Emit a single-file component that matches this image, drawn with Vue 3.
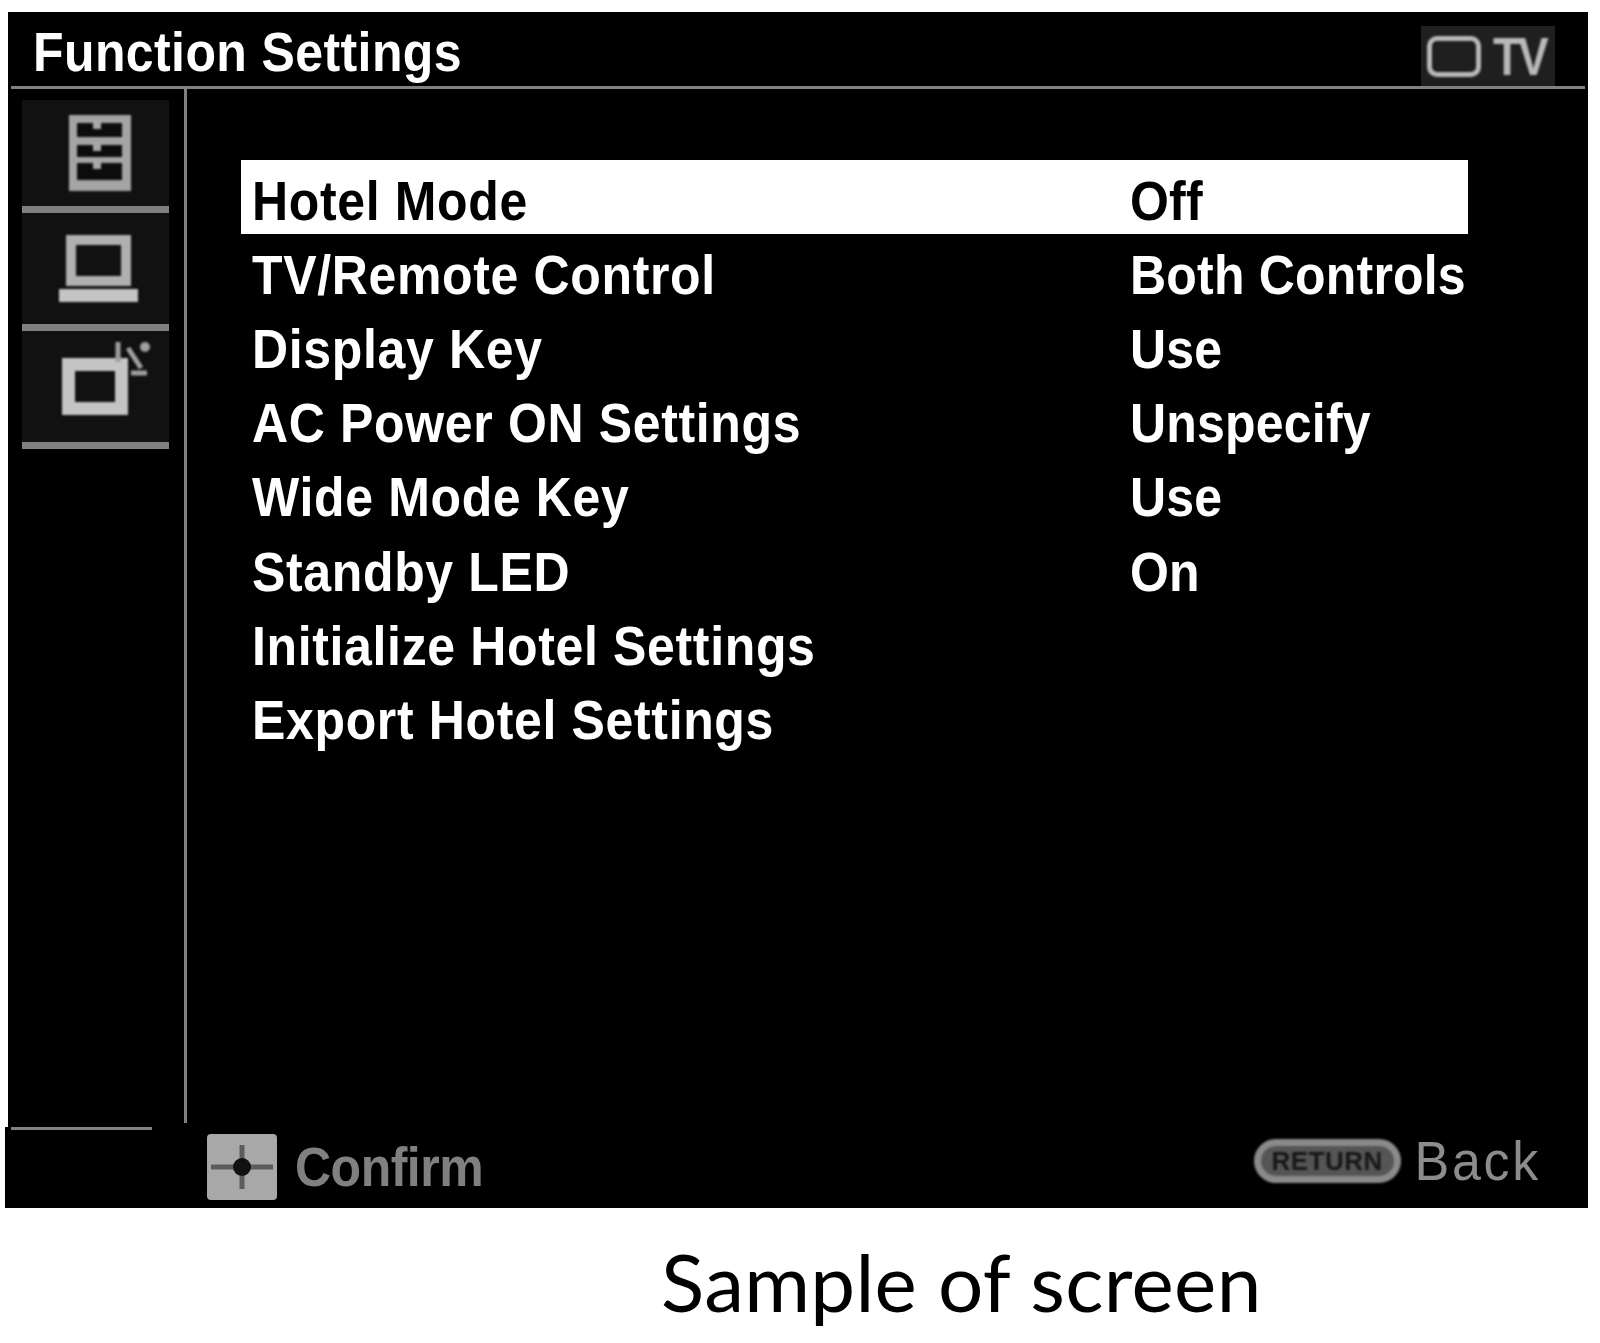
<script setup>
const rows = [
  { id: 1, name: "Hotel Mode", value: "Off", active: true },
  { id: 2, name: "TV/Remote Control", value: "Both Controls" },
  { id: 3, name: "Display Key", value: "Use" },
  { id: 4, name: "AC Power ON Settings", value: "Unspecify" },
  { id: 5, name: "Wide Mode Key", value: "Use" },
  { id: 6, name: "Standby LED", value: "On" },
  { id: 7, name: "Initialize Hotel Settings", value: "" },
  { id: 8, name: "Export Hotel Settings", value: "" },
];
</script>

<template>
  <div class="page">
    <div class="screen">
      <div class="head">
        <div class="title tall">Function Settings</div>
        <div class="source">
          <span class="source-box"></span>
          <span class="source-text">TV</span>
        </div>
      </div>
      <div class="body">
        <div class="side">
          <div class="tabs">
            <div class="tab">
              <svg class="icon drawers" width="62" height="76" viewBox="0 0 62 76">
                <rect width="62" height="76" fill="#a4a4a4" />
                <path d="M8 8H53V22H8ZM8 30H53V42H8ZM8 48H53V65H8Z" fill="#0c0c0c" />
                <path d="M28 6v8M28 28v8M28 46v8" stroke="#a8a8a8" stroke-width="8" />
              </svg>
            </div>
            <div class="tab">
              <svg class="icon monitor" width="80" height="68" viewBox="0 0 80 68">
                <rect x="12" y="5" width="55" height="41" fill="none" stroke="#b0b0b0" stroke-width="10" />
                <rect x="0" y="54" width="79" height="13" fill="#c4c4c4" />
              </svg>
            </div>
            <div class="tab">
              <svg class="icon tv" width="92" height="78" viewBox="0 0 92 78">
                <rect x="9.5" y="24.5" width="53" height="44" fill="none" stroke="#c4c4c4" stroke-width="13" />
                <path d="M59 2V22M69 8L82 28M72 33H88" stroke="#a0a0a0" stroke-width="5" />
                <circle cx="86" cy="7" r="5" fill="#a0a0a0" />
              </svg>
            </div>
          </div>
        </div>
        <div class="list">
          <div v-for="row in rows" :key="row.id" :class="['row', row.active ? 'active' : '']">
            <span class="name tall">{{ row.name }}</span>
            <span class="value tall">{{ row.value }}</span>
          </div>
        </div>
      </div>
    </div>
    <div class="foot">
      <div class="foot-line"></div>
      <div class="foot-row">
        <div class="confirm">
          <svg class="key" width="70" height="66" viewBox="0 0 70 66">
            <rect width="70" height="66" rx="4" fill="#a8a8a8" />
            <path d="M4 33H66M35 11V55" stroke="#5c5c5c" stroke-width="5" />
            <circle cx="35" cy="33" r="9" fill="#111" />
          </svg>
          <span class="tall">Confirm</span>
        </div>
        <div class="back">
          <span class="pill">RETURN</span>
          <span class="tall">Back</span>
        </div>
      </div>
    </div>
    <div class="caption">Sample of screen</div>
  </div>
</template>

<style scoped>
.page {
  width: 1600px;
  height: 1343px;
  background: #fff;
  font-family: "Liberation Sans", Arial, sans-serif;
  overflow: hidden;
  padding-top: 12px;
  box-sizing: border-box;
}

.tall {
  display: inline-block;
  transform: scaleY(1.12);
  filter: blur(0.5px);
}

.screen {
  margin-left: 8px;
  width: 1580px;
  height: 1115px;
  background: #000;
  display: flex;
  flex-direction: column;
}

.head {
  height: 74px;
  margin: 0 3px;
  border-bottom: 3px solid #808080;
  display: flex;
  justify-content: space-between;
  padding: 0 30px 0 22px;
}

.title {
  color: #fff;
  font-size: 50px;
  font-weight: 700;
  line-height: 1;
  letter-spacing: 0.4px;
  margin-top: 15px;
  height: 50px;
}

.source {
  margin-top: 14px;
  width: 134px;
  height: 60px;
  background: #1f1f1f;
  display: flex;
  align-items: center;
  gap: 12px;
  padding-left: 6px;
  box-sizing: border-box;
}

.source-box {
  width: 44px;
  height: 31px;
  border: 5px solid #b8b8b8;
  border-radius: 10px;
  filter: blur(1px);
}

.source-text {
  color: #b8b8b8;
  font-size: 46px;
  font-weight: 700;
  line-height: 1;
  letter-spacing: -3px;
  transform: scaleY(1.18);
  filter: blur(1px);
}

.body {
  flex: 1;
  display: flex;
  min-height: 0;
}

.side {
  flex: none;
  box-sizing: border-box;
  width: 179px;
  height: 1034px;
  border-right: 3px solid #808080;
  padding: 11px 0 0 14px;
}

.tabs {
  width: 147px;
  display: flex;
  flex-direction: column;
}

.tab {
  height: 111px;
  background: #111;
  border-bottom: 7px solid #808080;
  display: flex;
  align-items: center;
}

.tab:first-child {
  height: 106px;
}

.icon {
  filter: blur(1px);
}

.drawers {
  margin-left: 47px;
}

.monitor {
  margin: 1px 0 0 37px;
}

.tv {
  margin: -15px 0 0 37px;
}

.list {
  padding: 71px 0 0 54px;
  display: flex;
  flex-direction: column;
}

.row {
  width: 1227px;
  height: 74.2px;
  padding: 7px 0 0 11px;
  box-sizing: border-box;
  display: grid;
  grid-template-columns: 878px 1fr;
  align-items: center;
  color: #fff;
  font-size: 50px;
  font-weight: 700;
  white-space: nowrap;
}

.row.active {
  background: #fff;
  color: #000;
}

.name {
  letter-spacing: 0.65px;
}

.value {
  letter-spacing: 0.2px;
}

.foot {
  margin-left: 5px;
  width: 1583px;
  height: 81px;
  background: #000;
  position: relative;
}

.foot-line {
  position: absolute;
  left: 6px;
  top: 0;
  width: 141px;
  height: 3px;
  background: #808080;
}

.foot-row {
  height: 100%;
  display: flex;
  justify-content: space-between;
  padding: 7px 47px 0 202px;
  box-sizing: border-box;
}

.confirm {
  display: flex;
  align-items: center;
  gap: 18px;
  color: #808080;
  font-size: 50px;
  font-weight: 700;
  letter-spacing: -0.5px;
  height: 66px;
}

.key {
  filter: blur(0.6px);
}

.back {
  display: flex;
  align-items: center;
  gap: 14px;
  color: #8c8c8c;
  font-size: 52px;
  letter-spacing: 2.7px;
  height: 44px;
  margin-top: 5px;
}

.back .tall {
  transform: scaleY(1.08);
}

.pill {
  width: 147px;
  height: 44px;
  border-radius: 22px;
  border: 7px solid #8a8a8a;
  box-sizing: border-box;
  background: #555;
  color: #161616;
  font-size: 26px;
  font-weight: 700;
  letter-spacing: 0.5px;
  display: flex;
  align-items: center;
  justify-content: center;
  filter: blur(1px);
}

.caption {
  margin-top: 33px;
  margin-left: 661px;
  font-family: Lato, "Open Sans", sans-serif;
  font-size: 80px;
  letter-spacing: 0.3px;
  line-height: 1;
  color: #000;
}
</style>
